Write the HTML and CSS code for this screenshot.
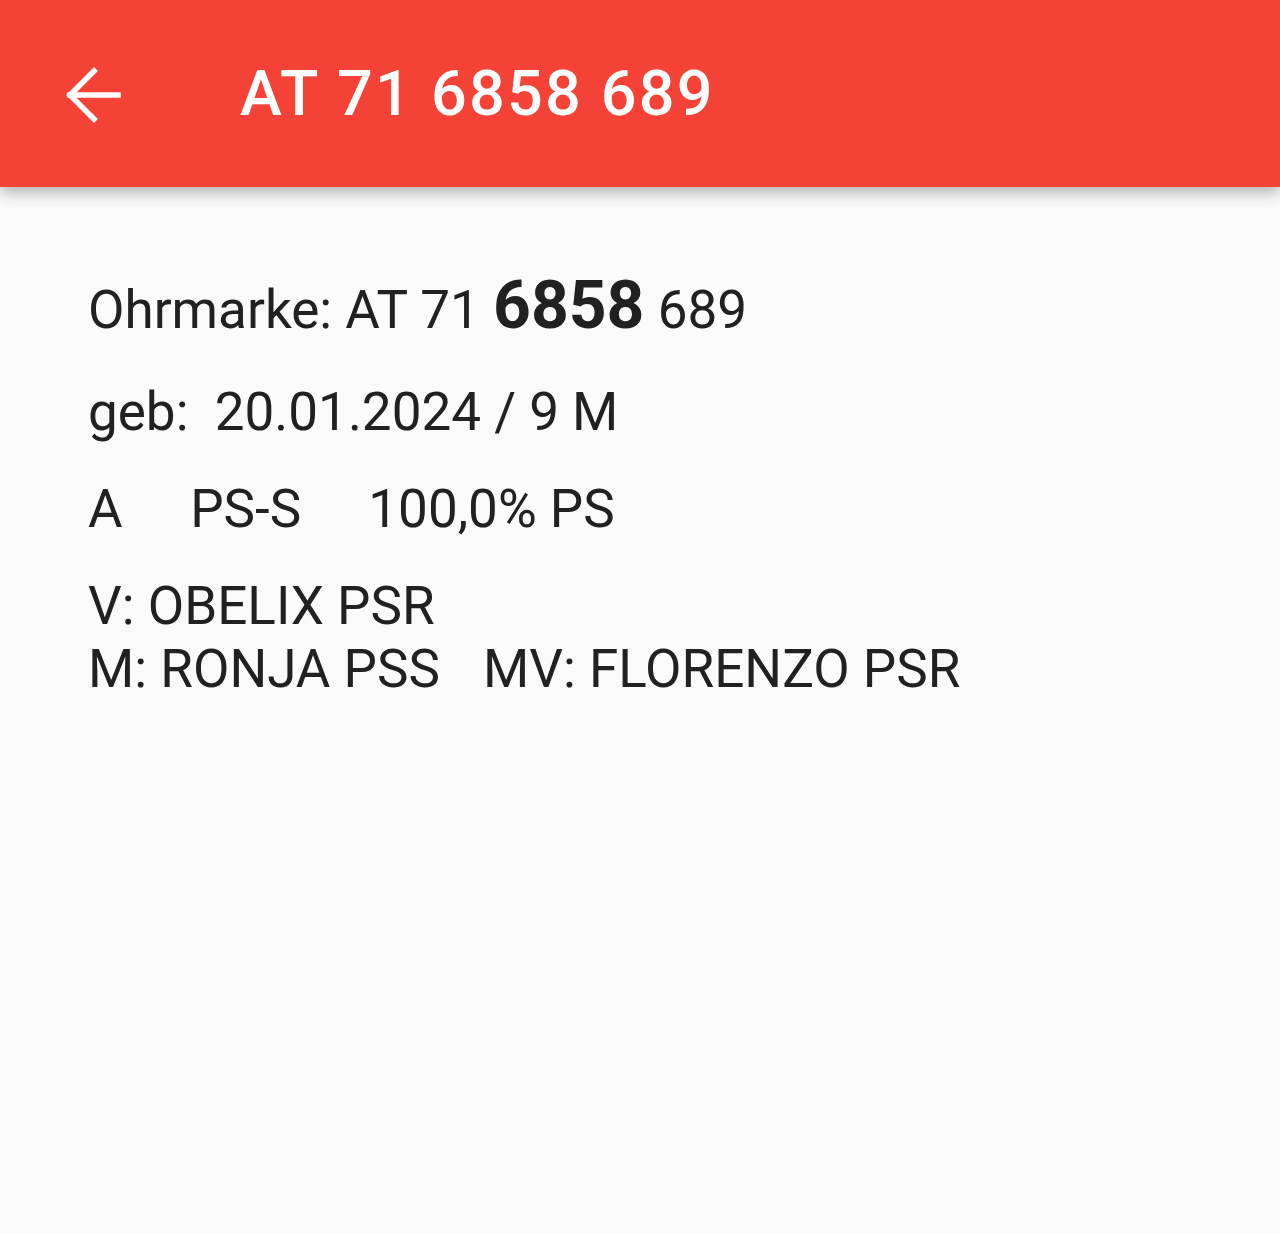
FILE: index.html
```html
<!DOCTYPE html>
<html lang="de">

<head>
    <meta charset="UTF-8">
    <meta name="viewport" content="width=device-width, initial-scale=1.0">
    <title>AT 71 6858 689</title>
    <link rel="stylesheet" href="styles.css">
</head>

<body>
    <header class="app-bar">
        <button class="back-button" aria-label="Zurück">
            <svg viewBox="0 0 56 56" width="56" height="56">
                <path d="M4 28H52M28 4L4 28L28 52" fill="none" stroke="#ffffff" stroke-width="5.5"
                    stroke-linecap="square" stroke-linejoin="miter" />
            </svg>
        </button>
        <h1 class="app-title">AT 71 6858 689</h1>
    </header>

    <main class="animal-details">
        <p class="detail-line first-line">Ohrmarke: AT 71 <span class="tag-main">6858</span> 689</p>
        <p class="detail-line keep-spaces">geb:  20.01.2024 / 9 M</p>
        <p class="detail-line">
            <span class="col col-sex">A</span>
            <span class="col col-breed">PS-S</span>
            <span class="col">100,0% PS</span>
        </p>
        <div class="detail-line parents">
            <div>V: OBELIX PSR</div>
            <div><span class="mother">M: RONJA PSS</span>MV: FLORENZO PSR</div>
        </div>
    </main>
</body>

</html>
```

FILE: styles.css
```css
body {
    margin: 0;
    background-color: #fafafa;
    font-family: 'Roboto', sans-serif;
    color: #212121;
    height: 100vh;
}

.app-bar {
    height: 187px;
    background-color: #f44336;
    display: flex;
    align-items: center;
    box-shadow: 0 6px 14px rgba(0, 0, 0, 0.28);
    position: relative;
}

.back-button {
    background: none;
    border: none;
    padding: 0;
    margin-left: 66px;
    margin-top: 2px;
    width: 56px;
    height: 56px;
    cursor: pointer;
}

.back-button svg {
    display: block;
}

.app-title {
    margin: 0 0 0 118px;
    color: #ffffff;
    font-size: 63px;
    font-weight: 500;
    letter-spacing: 2.2px;
}

.animal-details {
    padding: 87px 0 0 88px;
}

.detail-line {
    margin: 0 0 34px;
    font-size: 53px;
    line-height: 63px;
}

.first-line {
    margin-bottom: 39px;
}

.tag-main {
    font-size: 66px;
    font-weight: 700;
    line-height: 63px;
}

.keep-spaces {
    white-space: pre;
}

.col {
    display: inline-block;
}

.col-sex {
    width: 89px;
}

.col-breed {
    width: 165px;
}

.parents .mother {
    margin-right: 43px;
}
```
